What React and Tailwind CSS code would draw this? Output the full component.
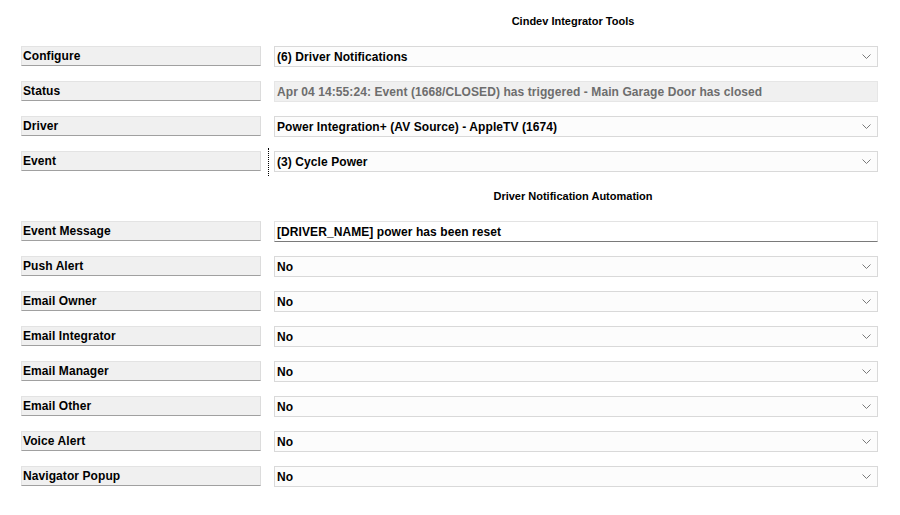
import React from 'react';

const Chevron = () => (
  <svg width="9" height="5" viewBox="0 0 9 5" className="shrink-0">
    <path d="M0.5 0.5 L4.5 4.5 L8.5 0.5" fill="none" stroke="#7a7a7a" strokeWidth="1" />
  </svg>
);

const Label = ({ children }) => (
  <div className="h-[20px] bg-[#f0f0f0] border-t border-l border-t-[#e3e3e3] border-l-[#e3e3e3] border-b border-r border-b-[#a0a0a0] border-r-[#dcdcdc] flex items-center pl-[1px] text-black">
    {children}
  </div>
);

const Combo = ({ value, focus }) => (
  <div className="relative">
    {focus && <div className="absolute left-[-6px] top-[-3px] h-[28px] border-l border-dotted border-black" />}
    <div className="h-[21px] bg-[#fcfcfc] border border-[#d9d9d9] flex items-center justify-between pl-[2px] pr-[6px] text-black">
      <span>{value}</span>
      <Chevron />
    </div>
  </div>
);

const Row = ({ label, children }) => (
  <div className="grid grid-cols-[240px_604px] gap-x-[13px] h-[35px] items-start">
    <Label>{label}</Label>
    {children}
  </div>
);

const Heading = ({ children }) => (
  <div className="grid grid-cols-[240px_604px] gap-x-[13px] h-[35px]">
    <div />
    <div className="text-center text-[11px] tracking-normal leading-[18px] pt-[1px] pr-[6px] text-black">{children}</div>
  </div>
);

const alerts = ['Push Alert', 'Email Owner', 'Email Integrator', 'Email Manager', 'Email Other', 'Voice Alert', 'Navigator Popup'];

export default function App() {
  return (
    <div className="w-[900px] h-[515px] bg-white pt-[11px] pl-[21px] font-['Liberation_Sans',Arial,sans-serif] font-bold text-[12px] tracking-[0.08px] overflow-hidden">
      <Heading>Cindev Integrator Tools</Heading>
      <Row label="Configure">
        <Combo value="(6) Driver Notifications" />
      </Row>
      <Row label="Status">
        <div className="h-[21px] bg-[#f0f0f0] border border-[#e6e6e6] flex items-center pl-[2px] text-[#6d6d6d]">
          Apr 04 14:55:24: Event (1668/CLOSED) has triggered - Main Garage Door has closed
        </div>
      </Row>
      <Row label="Driver">
        <Combo value="Power Integration+ (AV Source) - AppleTV (1674)" />
      </Row>
      <Row label="Event">
        <Combo value="(3) Cycle Power" focus />
      </Row>
      <Heading>Driver Notification Automation</Heading>
      <Row label="Event Message">
        <div className="h-[21px] bg-white border-t border-l border-r border-t-[#e3e3e3] border-l-[#e3e3e3] border-r-[#e3e3e3] border-b border-b-[#7a7a7a] flex items-center pl-[2px] text-black">
          [DRIVER_NAME] power has been reset
        </div>
      </Row>
      {alerts.map((a) => (
        <Row key={a} label={a}>
          <Combo value="No" />
        </Row>
      ))}
    </div>
  );
}
